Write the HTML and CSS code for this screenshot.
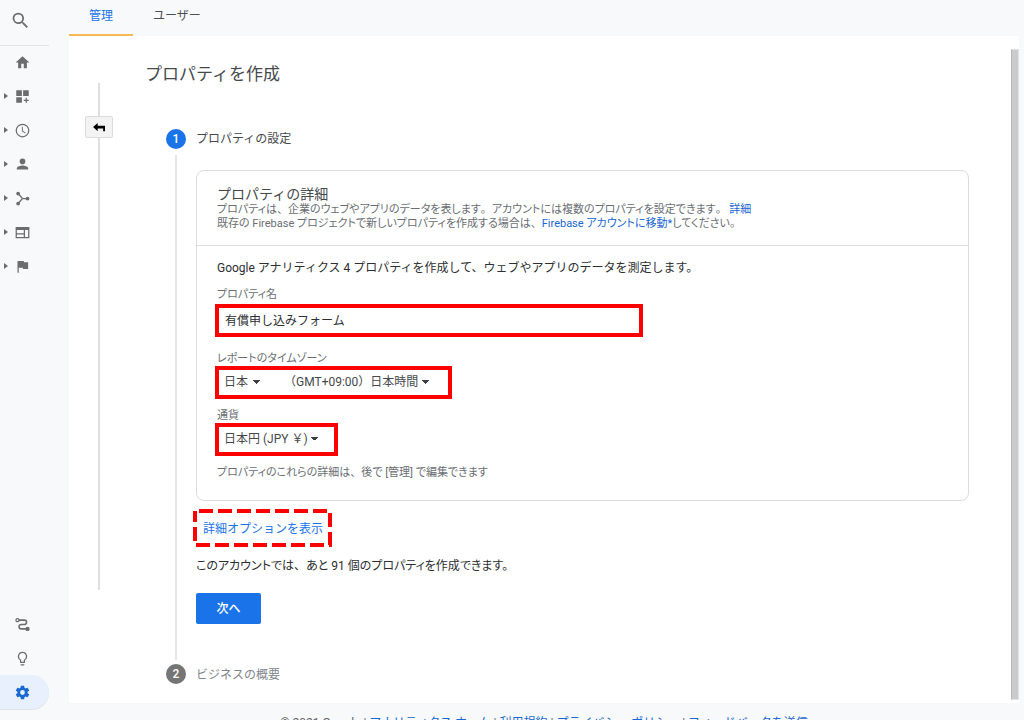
FILE: index.html
```html
<!DOCTYPE html>
<html lang="ja">
<head>
<meta charset="utf-8">
<title>プロパティを作成</title>
<link rel="stylesheet" href="styles.css">
</head>
<body>
<div class="app">
  <nav class="sidebar" aria-label="メニュー">
    <div class="side-group">
      <button class="side-search" aria-label="検索"><svg class="icon-lg" viewBox="0 0 24 24"><path d="M15.5 14h-.79l-.28-.27A6.47 6.47 0 0 0 16 9.5 6.5 6.5 0 1 0 9.5 16c1.61 0 3.09-.59 4.23-1.57l.27.28v.79l5 4.99L20.49 19zM9.500 14a4.500 4.500 0 1 1 0-9 4.500 4.500 0 0 1 0 9z"/></svg></button>
      <button class="side-item home" aria-label="ホーム"><svg class="icon" viewBox="0 0 24 24"><path d="M10 21v-7h4v7h5v-9h4L12 2 1 12h4v9z"/></svg></button>
      <button class="side-item has-arrow" aria-label="カスタム"><svg class="icon" viewBox="0 0 24 24"><path d="M2 2h9v9H2zM13 2h9v9h-9zM2 13h9v9H2zM17 14h2v3h3v2h-3v3h-2v-3h-3v-2h3z"/></svg></button>
      <button class="side-item has-arrow" aria-label="リアルタイム"><svg class="icon" viewBox="0 0 24 24"><path d="M12 1a11 11 0 1 0 0 22 11 11 0 0 0 0-22zm0 20a9 9 0 1 1 0-18 9 9 0 0 1 0 18zM12.500 6H11v7l5.250 3.650.75-1.230-4.500-3.170z"/></svg></button>
      <button class="side-item has-arrow" aria-label="ユーザー"><svg class="icon" viewBox="0 0 24 24"><circle cx="12" cy="7" r="4.500"/><path d="M3 20v-2c0-3 6-4.500 9-4.500s9 1.500 9 4.500v2z"/></svg></button>
      <button class="side-item has-arrow" aria-label="集客"><svg class="icon" viewBox="0 0 24 24"><path d="M5 4l7 8-7 8M12 12h8" fill="none" stroke="currentColor" stroke-width="2"/><circle cx="5" cy="4" r="3"/><circle cx="5" cy="20" r="3"/><circle cx="20" cy="12" r="3"/></svg></button>
      <button class="side-item has-arrow" aria-label="行動"><svg class="icon" viewBox="0 0 24 24"><path d="M1 3h22v18H1zm2 5v5h11V8zm0 7v4h11v-4zm13-7v11h5V8z" fill-rule="evenodd"/></svg></button>
      <button class="side-item has-arrow" aria-label="コンバージョン"><svg class="icon" viewBox="0 0 24 24"><path d="M14.400 5L14 3H4v19h2v-8h6.600l.4 2h8V5z"/></svg></button>
    </div>
    <div class="side-group">
      <button class="side-item" aria-label="アトリビューション"><svg class="icon" viewBox="0 0 24 24"><path d="M6 5h9a3.500 3.500 0 0 1 0 7H10a3.500 3.500 0 0 0 0 7h9" fill="none" stroke="currentColor" stroke-width="2.500"/><circle cx="4" cy="5" r="2.500" fill="none" stroke="currentColor" stroke-width="2"/><circle cx="20" cy="19" r="3.500"/></svg></button>
      <button class="side-item" aria-label="発見"><svg class="icon" viewBox="0 0 24 24"><path d="M9 22c0 .55.45 1 1 1h4c.55 0 1-.45 1-1v-1H9zM12 1a7.500 7.500 0 0 0-4 13.800V18c0 .55.45 1 1 1h6c.55 0 1-.45 1-1v-3.200A7.500 7.500 0 0 0 12 1zm2.850 12.600l-.85.6V17h-4v-2.800l-.85-.6A5.500 5.500 0 1 1 14.850 13.600z"/></svg></button>
      <button class="side-item active" aria-label="管理"><svg class="icon" viewBox="1 1 22 22"><path d="M19.430 12.980c.04-.32.070-.64.070-.98s-.03-.66-.07-.98l2.110-1.650c.19-.15.24-.42.120-.64l-2-3.460c-.12-.22-.39-.3-.61-.22l-2.490 1c-.52-.4-1.080-.73-1.690-.98l-.38-2.650A.49.49 0 0 0 14 2h-4c-.25 0-.46.180-.49.420l-.38 2.650c-.61.25-1.170.59-1.690.98l-2.490-1c-.23-.09-.49 0-.61.220l-2 3.460c-.13.220-.07.490.120.640l2.110 1.650c-.04.320-.07.650-.07.980s.03.660.07.980l-2.110 1.650c-.19.150-.24.420-.12.640l2 3.460c.12.220.39.300.61.220l2.490-1c.52.400 1.080.730 1.690.980l.38 2.650c.03.240.24.420.49.420h4c.25 0 .46-.18.490-.42l.38-2.650c.61-.25 1.170-.59 1.690-.98l2.490 1c.23.090.49 0 .61-.22l2-3.460c.12-.22.070-.49-.12-.64zM12 15.500a3.500 3.500 0 1 1 0-7 3.500 3.500 0 0 1 0 7z"/></svg></button>
    </div>
  </nav>

  <div class="page">
    <header class="tabs">
      <a class="tab selected" href="#">管理</a>
      <a class="tab" href="#">ユーザー</a>
    </header>

    <main class="panel">
      <div class="rail"><button class="back" aria-label="戻る"><svg class="back-icon" viewBox="0 0 14 12"><path d="M5 1v3h8v6h-2V7H5v3L0 5.500z"/></svg></button></div>
      <div class="content">
        <h1 class="title">プロパティを作成</h1>
        <section class="step">
          <span class="num">1</span>
          <h2 class="step-title">プロパティの設定</h2>
          <div class="line"></div>
          <form class="step-body">
            <div class="card">
              <div class="card-head">
                <h3 class="card-title">プロパティの詳細</h3>
                <p class="desc">プロパティは<span class="full">、</span>企業のウェブやアプリのデータを表します<span class="full">。</span>アカウントには複数のプロパティを設定できます<span class="full">。</span> <a class="link" href="#">詳細</a><br>既存の Firebase プロジェクトで新しいプロパティを作成する場合は<span class="full">、</span><a class="link" href="#">Firebase アカウントに移動*</a>してください<span class="full">。</span></p>
              </div>
              <div class="card-body">
                <p class="lead">Google アナリティクス 4 プロパティを作成して、ウェブやアプリのデータを測定します。</p>
                <label class="label" for="name">プロパティ名</label>
                <input class="mark name" id="name" type="text" value="有償申し込みフォーム">
                <label class="label zone-label" for="country">レポートのタイムゾーン</label>
                <div class="mark zone">
                  <select class="select" id="country"><option>日本</option></select>
                  <select class="select" aria-label="タイムゾーン"><option>（GMT+09:00）日本時間</option></select>
                </div>
                <label class="label money-label" for="currency">通貨</label>
                <div class="mark money">
                  <select class="select" id="currency"><option>日本円 (JPY ￥)</option></select>
                </div>
                <p class="desc note">プロパティのこれらの詳細は<span class="full">、</span>後で [管理] で編集できます</p>
              </div>
            </div>
            <div class="options">
              <svg class="dashes"><rect class="dash-rect" x="2" y="2" width="135" height="34"/></svg>
              <a class="options-link" href="#">詳細オプションを表示</a>
            </div>
            <p class="remain">このアカウントでは<span class="full">、</span>あと 91 個のプロパティを作成できます。</p>
            <button class="next" type="button">次へ</button>
          </form>
        </section>
        <section class="step">
          <span class="num idle">2</span>
          <h2 class="step-title muted">ビジネスの概要</h2>
        </section>
      </div>
      <div class="scrollbar"></div>
    </main>

    <footer class="footer">© 2021 Google | <a class="foot-link" href="#">アナリティクス ホーム</a> | <a class="foot-link" href="#">利用規約</a> | <a class="foot-link" href="#">プライバシー ポリシー</a> | <a class="foot-link" href="#">フィードバックを送信</a></footer>
  </div>
</div>
</body>
</html>
```
FILE: styles.css
```css
* { box-sizing: border-box; }
body, h1, h2, h3, p { margin: 0; font-weight: 400; }
body {
  background: #f8f9fb;
  color: #46494c;
  font-family: Roboto, "Noto Sans CJK JP", sans-serif;
  font-size: 12px;
}
button, input, select { font: inherit; color: inherit; border: 0; padding: 0; background: none; }
a { text-decoration: none; }
.app { display: flex; gap: 20px; height: 100vh; overflow: hidden; }

.sidebar { display: flex; flex-direction: column; justify-content: space-between; width: 49px; padding-bottom: 11px; color: #6b6c6e; }
.side-group { display: flex; flex-direction: column; }
.side-search { height: 46px; padding: 0 8px 5px 0; border-bottom: 1px solid #e2e3e5; }
.side-item { position: relative; display: flex; align-items: center; justify-content: center; height: 34px; padding-right: 5px; }
.home { height: 33px; }
.has-arrow::before { content: ""; position: absolute; left: 4px; top: 14px; border: 3px solid transparent; border-left: 4px solid #6b6c6e; border-right: 0; }
.icon { width: 15px; height: 15px; fill: currentColor; }
.icon-lg { width: 21px; height: 21px; fill: currentColor; vertical-align: middle; }
.active { color: #1967d2; background: #e8f0fd; border-radius: 0 17px 17px 0; box-shadow: 0 1px #e2e3e5; }

.page { display: flex; flex: 1; flex-direction: column; min-width: 0; padding-right: 5px; }
.tabs { display: flex; height: 36px; }
.tab { padding: 0 20px; line-height: 32px; color: #4b4d50; }
.selected { color: #1a73e8; border-bottom: 2px solid #f9b956; }

.panel { display: flex; flex: 1; min-height: 0; background: #fff; }
.rail { width: 28px; margin: 47px 0 113px 16px; padding-top: 33px; background: linear-gradient(#dfdfdf, #dfdfdf) center / 2px 100% no-repeat; }
.back { display: flex; align-items: center; justify-content: center; width: 28px; height: 22px; background: #f3f3f3; border: 1px solid #dcdcdc; border-radius: 2px; }
.back-icon { width: 13px; height: 11px; }
.content { flex: 1; min-width: 0; padding: 26px 42px 0 32px; }
.title { margin-bottom: 43px; font-size: 17px; line-height: 24px; }
.step { display: grid; grid-template-columns: 20px 1fr; column-gap: 10px; margin-left: 21px; }
.num { height: 20px; border-radius: 50%; background: #1a73e8; color: #fff; font-weight: 500; line-height: 20px; text-align: center; }
.idle { background: #757575; }
.step-title { font-size: 12px; line-height: 20px; }
.muted { padding-top: 1px; color: #80868b; }
.line { width: 2px; margin: 6px auto 4px; background: #e6e7e9; }
.step-body { padding: 21px 0 40px; }

.card { border: 1px solid #dadce0; border-radius: 8px; }
.card-head { padding: 14px 20px; border-bottom: 1px solid #dadce0; }
.card-title { font-size: 14px; line-height: 18px; }
.desc { color: #6a6e73; font-size: 11px; line-height: 14px; font-feature-settings: "palt"; }
.full { font-feature-settings: normal; }
.link { color: #1967d2; }
.card-body { padding: 13px 20px 20px; }
.lead { margin-bottom: 11px; line-height: 18px; color: #2c2e31; }
.label { display: block; color: #6a6e73; font-size: 11px; line-height: 14px; font-feature-settings: "palt"; }
.mark { display: flex; align-items: center; height: 33px; margin-left: -2px; border: 4px solid #f00; }
.name { width: 428px; max-width: 100%; margin-top: 2px; padding: 0 6px 3px; color: #2c2e31; }
.zone-label { margin-top: 15px; }
.zone { width: 237px; padding-left: 5px; padding-bottom: 2px; gap: 24px; }
.money-label { margin-top: 10px; }
.money { width: 123px; padding-left: 5px; padding-bottom: 2px; }
.select { appearance: none; height: 20px; padding-right: 11px; background: linear-gradient(to bottom left, #3c4043 50%, transparent 50%) right 4px top 8px / 4px 4px no-repeat, linear-gradient(to bottom right, #3c4043 50%, transparent 50%) right 0 top 8px / 4px 4px no-repeat; }
.note { margin-top: 10px; }

.options { position: relative; width: 139px; height: 38px; margin: 8px 0 0 -3px; padding-left: 10px; line-height: 40px; }
.dashes { position: absolute; inset: 0; width: 100%; height: 100%; }
.dash-rect { fill: none; stroke: #f00; stroke-width: 4; stroke-dasharray: 14 5; stroke-dashoffset: -4; }
.options-link { position: relative; color: #1a73e8; }
.remain { margin: 10px 0 18px; font-size: 12px; line-height: 18px; font-feature-settings: "palt"; color: #2c2e31; }
.next { width: 65px; height: 31px; padding-bottom: 2px; border-radius: 2px; background: #1a73e8; color: #fff; font-weight: 500; }

.scrollbar { width: 8px; margin: 13px 0 3px; background: #cbcbcb; border: 1px solid #e3e3e3; border-left-color: #b9b9b9; }
.footer { height: 17px; padding-top: 13px; overflow: hidden; line-height: 14px; text-align: center; white-space: nowrap; color: #5f6368; }
.foot-link { color: #1967d2; }
```
